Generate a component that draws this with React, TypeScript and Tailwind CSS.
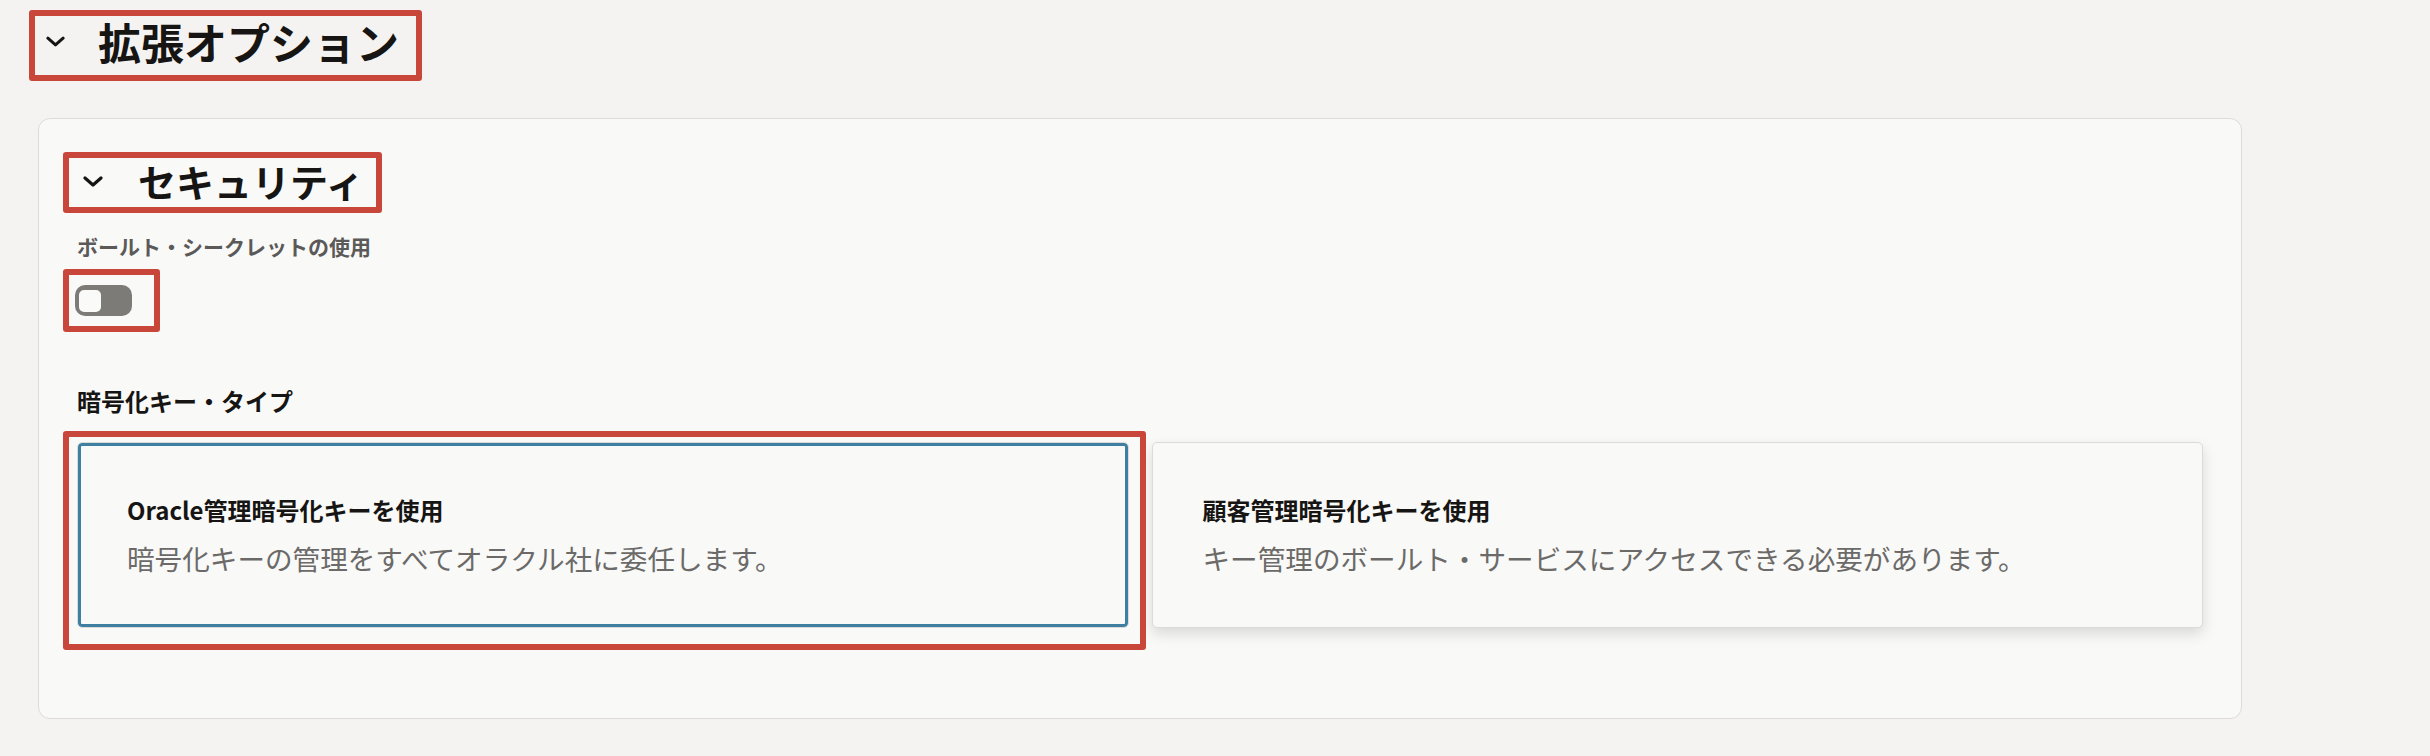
import React from "react";

function Chevron({ w, h }: { w: number; h: number }) {
  return (
    <svg width={w} height={h} viewBox="0 0 20 11" fill="none" className="shrink-0">
      <path d="M2 2 L10 9 L18 2" stroke="#161513" strokeWidth="3.2" strokeLinecap="round" strokeLinejoin="round" />
    </svg>
  );
}

function OptionCard({ title, desc, selected }: { title: string; desc: string; selected?: boolean }) {
  return (
    <div
      className={
        selected
          ? "flex h-[186px] flex-col justify-center gap-[23px] rounded-[5px] border border-[#dcdbd9] bg-[#f9f9f8] pl-[49px] shadow-[inset_0_0_0_3px_#3e7fa2]"
          : "flex h-[186px] flex-col justify-center gap-[23px] rounded-[5px] border border-[#dcdbd9] bg-[#f9f9f8] pl-[50px] shadow-[0_6px_14px_rgba(0,0,0,0.13)]"
      }
    >
      <div className="text-[24px] font-bold leading-none text-[#161513]">{title}</div>
      <div className="text-[27.6px] leading-none text-[#6b6a68]">{desc}</div>
    </div>
  );
}

export default function App() {
  return (
    <div className="min-h-screen bg-[#f4f3f1] pt-[10px] font-['Noto_Sans_CJK_JP','Noto_Sans',sans-serif]">
      {/* 拡張オプション */}
      <div className="ml-[29px] flex w-fit items-center rounded-[3px] border-[6px] border-[#c8473a] pb-[12px] pl-[11px] pr-[17px] pt-[4px]">
        <Chevron w={19} h={11} />
        <h1 className="ml-[33px] text-[43px] font-bold leading-none text-[#161513]">拡張オプション</h1>
      </div>

      <div className="ml-[38px] mt-[37px] w-[2204px] rounded-[12px] border border-[#dcdbd9] bg-[#f9f9f8] px-[38px] pb-[90px] pt-[33px]">
        {/* セキュリティ */}
        <div className="-ml-[14px] flex w-fit items-center rounded-[3px] border-[6px] border-[#c8473a] pb-[7px] pl-[14px] pr-[12px] pt-[4px]">
          <Chevron w={20} h={11} />
          <h2 className="ml-[35px] text-[38px] font-bold leading-none text-[#161513]">セキュリティ</h2>
        </div>

        <div className="mt-[23px] text-[21px] font-bold leading-none text-[#5b5a58]">ボールト・シークレットの使用</div>

        <div className="-ml-[14px] mt-[12px] w-fit rounded-[3px] border-[6px] border-[#c8473a] pb-[10px] pl-[6px] pr-[22px] pt-[10px]">
          <button className="flex h-[31px] w-[57px] items-center rounded-[10px] bg-[#7d7b78] pl-[2px]">
            <span className="h-[26px] w-[26px] rounded-[7px] border-2 border-[#7d7b78] bg-[#fafaf9]" />
          </button>
        </div>

        <div className="mt-[57px] text-[24px] font-bold leading-none text-[#161513]">暗号化キー・タイプ</div>

        <div className="mt-[29px] grid grid-cols-2 gap-[23px]">
          <div className="relative">
            <div className="pointer-events-none absolute -bottom-[22px] -left-[14px] -right-[17px] -top-[11px] rounded-[3px] border-[6px] border-[#c8473a]" />
            <OptionCard selected title="Oracle管理暗号化キーを使用" desc="暗号化キーの管理をすべてオラクル社に委任します。" />
          </div>
          <OptionCard title="顧客管理暗号化キーを使用" desc="キー管理のボールト・サービスにアクセスできる必要があります。" />
        </div>
      </div>
    </div>
  );
}
